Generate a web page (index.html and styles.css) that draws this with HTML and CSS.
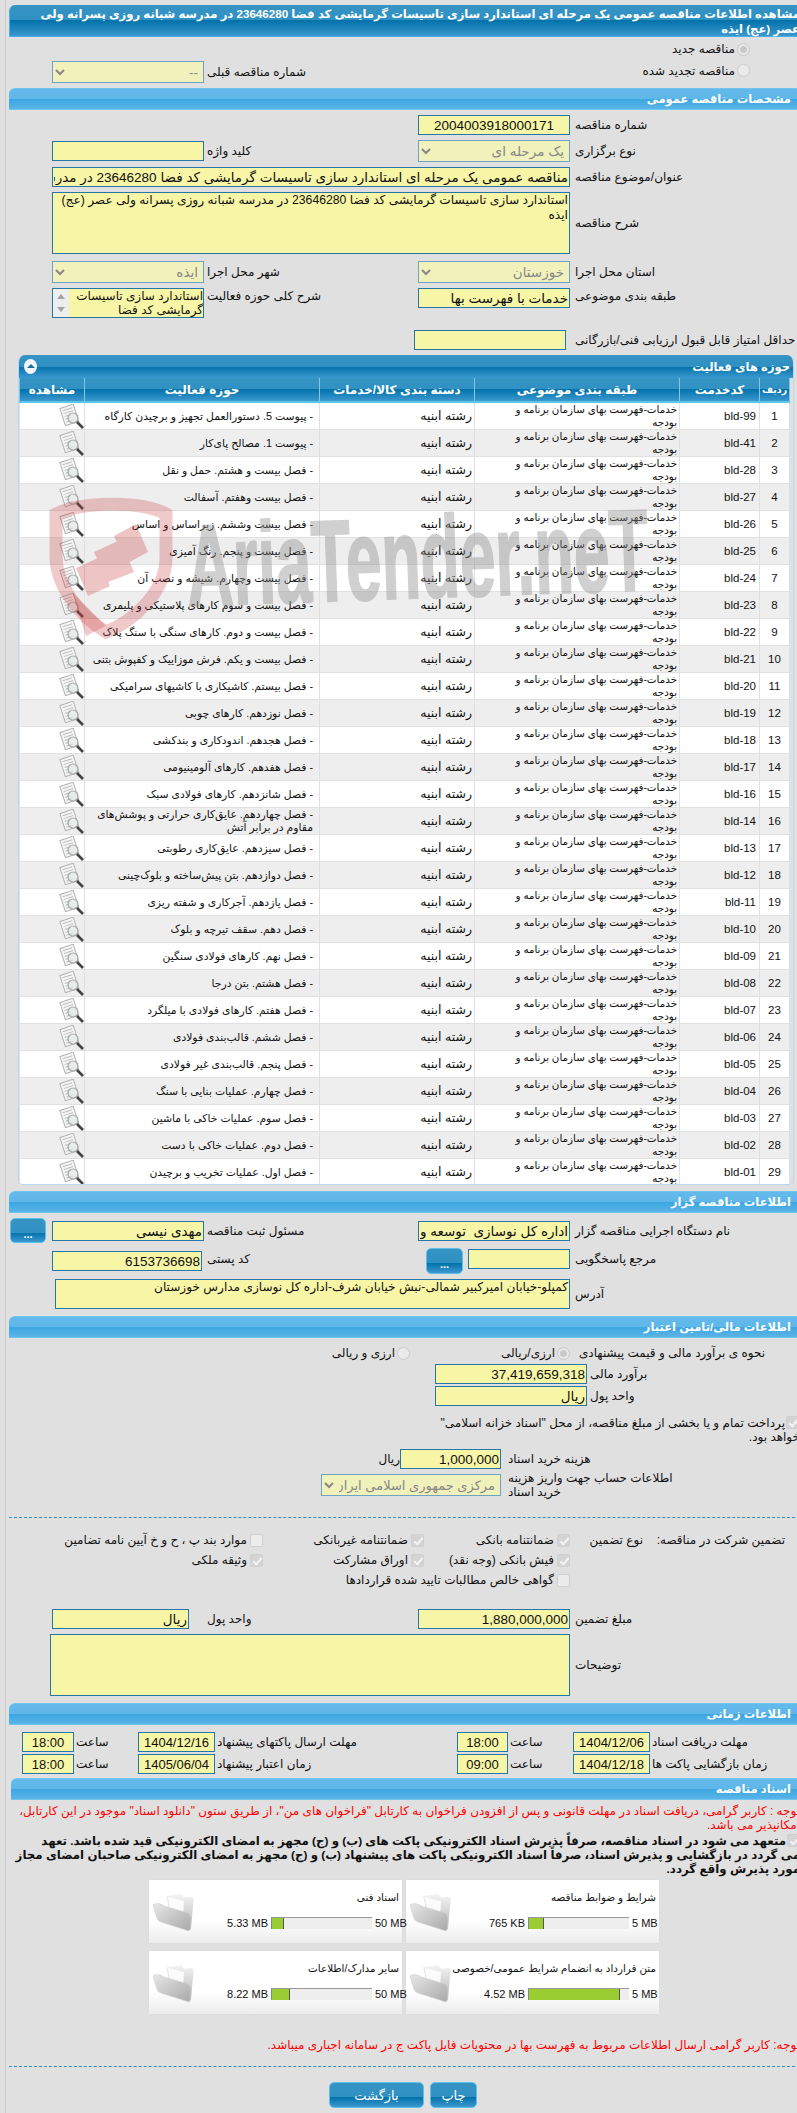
FILE: index.html
```html
<!DOCTYPE html>
<html lang="fa">
<head>
<meta charset="utf-8">
<title>مشاهده اطلاعات مناقصه</title>
<link rel="stylesheet" href="styles.css">
</head>
<body>
<svg class="defs" aria-hidden="true">
  <defs>
    <linearGradient id="fg1" x1="0" y1="0" x2="0" y2="1"><stop offset="0" stop-color="#f4f4f4"/><stop offset="1" stop-color="#b4b4b4"/></linearGradient>
    <linearGradient id="fg2" x1="0" y1="0" x2="1" y2="1"><stop offset="0" stop-color="#e8e8e8"/><stop offset="1" stop-color="#a8a8a8"/></linearGradient>
  </defs>
  <symbol id="mag" viewBox="0 0 25 25">
    <g transform="rotate(-18 10 10)">
      <rect x="3" y="2" width="14" height="18" fill="#f6f6f6" stroke="#b0b0b0" stroke-width="1"/>
      <path d="M5 5h10M5 8h10M5 11h6M5 14h5M5 17h7" stroke="#bdbdbd" stroke-width="1" fill="none"/>
    </g>
    <circle cx="14" cy="14" r="5" fill="#e4e8ea" fill-opacity=".7" stroke="#a8a8a8" stroke-width="1.2"/>
    <path d="M18 18l6 6" stroke="#444" stroke-width="2.6"/>
  </symbol>
  <symbol id="folder" viewBox="0 0 42 38">
    <path d="M14 3 L30 1 C31 5 32 5 38 4 C41 4 42 5 41.5 8 L39 35 C39 37 37 37 36 36 L20 28 Z" fill="url(#fg1)"/>
    <path d="M16 4 L32 8 L31 24 L18 20 Z" fill="#fbfbfb"/>
    <path d="M1 12 C4 10 8 10 12 13 L36 20 C38 21 39 24 39 28 L38 36 C38 38 36 38 34 37 L9 29 C6 28 5 26 4 22 Z" fill="url(#fg2)" stroke="#cfcfcf" stroke-width=".6"/>
  </symbol>
</svg>

<div class="page">
  <h1 class="title">مشاهده اطلاعات مناقصه عمومی یک مرحله ای استاندارد سازی تاسیسات گرمایشی کد فضا 23646280 در مدرسه شبانه روزی پسرانه ولی عصر (عج) ایذه</h1>

  <div class="new-row"><label class="radio-label"><input class="rd" type="radio" checked disabled>مناقصه جدید</label></div>
  <div class="frow prior-row">
    <div class="renew"><label class="radio-label"><input class="rd" type="radio" disabled>مناقصه تجدید شده</label></div>
    <div class="lbl prior-lbl">شماره مناقصه قبلی</div>
    <select class="fld sel" disabled><option>--</option></select>
  </div>

  <h2 class="sec">مشخصات مناقصه عمومی</h2>
  <div class="fgroup first">
    <div class="frow"><div class="lbl">شماره مناقصه</div><input class="fld center" value="2004003918000171" readonly></div>
    <div class="frow g5">
      <div class="lbl">نوع برگزاری</div><select class="fld sel" disabled><option>یک مرحله ای</option></select>
      <div class="lbl">کلید واژه</div><input class="fld" readonly>
    </div>
    <div class="frow g5 tall20">
      <div class="lbl">عنوان/موضوع مناقصه</div>
      <input class="fld span3" value="مناقصه عمومی یک مرحله ای استاندارد سازی تاسیسات گرمایشی کد فضا 23646280 در مدرسه شبانه روزی پسرانه ولی عصر (عج) ایذه" readonly>
    </div>
    <div class="frow g5">
      <div class="lbl">شرح مناقصه</div>
      <textarea class="fld span3 area" readonly>استاندارد سازی تاسیسات گرمایشی کد فضا 23646280 در مدرسه شبانه روزی پسرانه ولی عصر (عج) ایذه</textarea>
    </div>
    <div class="frow g7">
      <div class="lbl">استان محل اجرا</div><select class="fld sel" disabled><option>خوزستان</option></select>
      <div class="lbl">شهر محل اجرا</div><select class="fld sel" disabled><option>ایذه</option></select>
    </div>
    <div class="frow g5 top">
      <div class="lbl">طبقه بندی موضوعی</div><input class="fld" value="خدمات با فهرست بها" readonly>
      <div class="lbl">شرح کلی حوزه فعالیت</div>
      <div class="listbox">
        <div class="listtext">استاندارد سازی تاسیسات گرمایشی کد فضا</div>
        <div class="scroll"><i class="up"></i><i class="down"></i></div>
      </div>
    </div>
    <div class="score-row">
      <div class="lbl score-lbl">حداقل امتیاز قابل قبول ارزیابی فنی/بازرگانی</div>
      <input class="fld score" readonly>
    </div>
  </div>

  <section class="box">
    <div class="box-head"><span>حوزه های فعالیت</span><i class="collapse"></i></div>
    <table class="grid">
      <colgroup><col class="c1"><col class="c2"><col class="c3"><col class="c4"><col class="c5"><col class="c6"></colgroup>
      <thead><tr><th class="th-num">ردیف</th><th>کدخدمت</th><th>طبقه بندی موضوعی</th><th>دسته بندی کالا/خدمات</th><th>حوزه فعالیت</th><th>مشاهده</th></tr></thead>
      <tbody>
        <tr><td>1</td><td class="code">bld-99</td><td class="subj">خدمات-فهرست بهای سازمان برنامه و<br>بودجه</td><td class="cat">رشته ابنیه</td><td class="act">- پیوست 5. دستورالعمل تجهیز و برچیدن کارگاه</td><td class="view"><svg class="mag"><use href="#mag"/></svg></td></tr>
        <tr><td>2</td><td class="code">bld-41</td><td class="subj">خدمات-فهرست بهای سازمان برنامه و<br>بودجه</td><td class="cat">رشته ابنیه</td><td class="act">- پیوست 1. مصالح پای‌کار</td><td class="view"><svg class="mag"><use href="#mag"/></svg></td></tr>
        <tr><td>3</td><td class="code">bld-28</td><td class="subj">خدمات-فهرست بهای سازمان برنامه و<br>بودجه</td><td class="cat">رشته ابنیه</td><td class="act">- فصل بیست و هشتم. حمل و نقل</td><td class="view"><svg class="mag"><use href="#mag"/></svg></td></tr>
        <tr><td>4</td><td class="code">bld-27</td><td class="subj">خدمات-فهرست بهای سازمان برنامه و<br>بودجه</td><td class="cat">رشته ابنیه</td><td class="act">- فصل بیست وهفتم. آسفالت</td><td class="view"><svg class="mag"><use href="#mag"/></svg></td></tr>
        <tr><td>5</td><td class="code">bld-26</td><td class="subj">خدمات-فهرست بهای سازمان برنامه و<br>بودجه</td><td class="cat">رشته ابنیه</td><td class="act">- فصل بیست وششم. زیراساس و اساس</td><td class="view"><svg class="mag"><use href="#mag"/></svg></td></tr>
        <tr><td>6</td><td class="code">bld-25</td><td class="subj">خدمات-فهرست بهای سازمان برنامه و<br>بودجه</td><td class="cat">رشته ابنیه</td><td class="act">- فصل بیست و پنجم. رنگ آمیزی</td><td class="view"><svg class="mag"><use href="#mag"/></svg></td></tr>
        <tr><td>7</td><td class="code">bld-24</td><td class="subj">خدمات-فهرست بهای سازمان برنامه و<br>بودجه</td><td class="cat">رشته ابنیه</td><td class="act">- فصل بیست وچهارم. شیشه و نصب آن</td><td class="view"><svg class="mag"><use href="#mag"/></svg></td></tr>
        <tr><td>8</td><td class="code">bld-23</td><td class="subj">خدمات-فهرست بهای سازمان برنامه و<br>بودجه</td><td class="cat">رشته ابنیه</td><td class="act">- فصل بیست و سوم کارهای پلاستیکی و پلیمری</td><td class="view"><svg class="mag"><use href="#mag"/></svg></td></tr>
        <tr><td>9</td><td class="code">bld-22</td><td class="subj">خدمات-فهرست بهای سازمان برنامه و<br>بودجه</td><td class="cat">رشته ابنیه</td><td class="act">- فصل بیست و دوم. کارهای سنگی با سنگ پلاک</td><td class="view"><svg class="mag"><use href="#mag"/></svg></td></tr>
        <tr><td>10</td><td class="code">bld-21</td><td class="subj">خدمات-فهرست بهای سازمان برنامه و<br>بودجه</td><td class="cat">رشته ابنیه</td><td class="act">- فصل بیست و یکم. فرش موزاییک و کفپوش بتنی</td><td class="view"><svg class="mag"><use href="#mag"/></svg></td></tr>
        <tr><td>11</td><td class="code">bld-20</td><td class="subj">خدمات-فهرست بهای سازمان برنامه و<br>بودجه</td><td class="cat">رشته ابنیه</td><td class="act">- فصل بیستم. کاشیکاری با کاشیهای سرامیکی</td><td class="view"><svg class="mag"><use href="#mag"/></svg></td></tr>
        <tr><td>12</td><td class="code">bld-19</td><td class="subj">خدمات-فهرست بهای سازمان برنامه و<br>بودجه</td><td class="cat">رشته ابنیه</td><td class="act">- فصل نوزدهم. کارهای چوبی</td><td class="view"><svg class="mag"><use href="#mag"/></svg></td></tr>
        <tr><td>13</td><td class="code">bld-18</td><td class="subj">خدمات-فهرست بهای سازمان برنامه و<br>بودجه</td><td class="cat">رشته ابنیه</td><td class="act">- فصل هجدهم. اندودکاری و بندکشی</td><td class="view"><svg class="mag"><use href="#mag"/></svg></td></tr>
        <tr><td>14</td><td class="code">bld-17</td><td class="subj">خدمات-فهرست بهای سازمان برنامه و<br>بودجه</td><td class="cat">رشته ابنیه</td><td class="act">- فصل هفدهم. کارهای آلومینیومی</td><td class="view"><svg class="mag"><use href="#mag"/></svg></td></tr>
        <tr><td>15</td><td class="code">bld-16</td><td class="subj">خدمات-فهرست بهای سازمان برنامه و<br>بودجه</td><td class="cat">رشته ابنیه</td><td class="act">- فصل شانزدهم. کارهای فولادی سبک</td><td class="view"><svg class="mag"><use href="#mag"/></svg></td></tr>
        <tr><td>16</td><td class="code">bld-14</td><td class="subj">خدمات-فهرست بهای سازمان برنامه و<br>بودجه</td><td class="cat">رشته ابنیه</td><td class="act two">- فصل چهاردهم. عایق‌کاری حرارتی و پوشش‌های<br>مقاوم در برابر آتش</td><td class="view"><svg class="mag"><use href="#mag"/></svg></td></tr>
        <tr><td>17</td><td class="code">bld-13</td><td class="subj">خدمات-فهرست بهای سازمان برنامه و<br>بودجه</td><td class="cat">رشته ابنیه</td><td class="act">- فصل سیزدهم. عایق‌کاری رطوبتی</td><td class="view"><svg class="mag"><use href="#mag"/></svg></td></tr>
        <tr><td>18</td><td class="code">bld-12</td><td class="subj">خدمات-فهرست بهای سازمان برنامه و<br>بودجه</td><td class="cat">رشته ابنیه</td><td class="act">- فصل دوازدهم. بتن پیش‌ساخته و بلوک‌چینی</td><td class="view"><svg class="mag"><use href="#mag"/></svg></td></tr>
        <tr><td>19</td><td class="code">bld-11</td><td class="subj">خدمات-فهرست بهای سازمان برنامه و<br>بودجه</td><td class="cat">رشته ابنیه</td><td class="act">- فصل یازدهم. آجرکاری و شفته ریزی</td><td class="view"><svg class="mag"><use href="#mag"/></svg></td></tr>
        <tr><td>20</td><td class="code">bld-10</td><td class="subj">خدمات-فهرست بهای سازمان برنامه و<br>بودجه</td><td class="cat">رشته ابنیه</td><td class="act">- فصل دهم. سقف تیرچه و بلوک</td><td class="view"><svg class="mag"><use href="#mag"/></svg></td></tr>
        <tr><td>21</td><td class="code">bld-09</td><td class="subj">خدمات-فهرست بهای سازمان برنامه و<br>بودجه</td><td class="cat">رشته ابنیه</td><td class="act">- فصل نهم. کارهای فولادی سنگین</td><td class="view"><svg class="mag"><use href="#mag"/></svg></td></tr>
        <tr><td>22</td><td class="code">bld-08</td><td class="subj">خدمات-فهرست بهای سازمان برنامه و<br>بودجه</td><td class="cat">رشته ابنیه</td><td class="act">- فصل هشتم. بتن درجا</td><td class="view"><svg class="mag"><use href="#mag"/></svg></td></tr>
        <tr><td>23</td><td class="code">bld-07</td><td class="subj">خدمات-فهرست بهای سازمان برنامه و<br>بودجه</td><td class="cat">رشته ابنیه</td><td class="act">- فصل هفتم. کارهای فولادی با میلگرد</td><td class="view"><svg class="mag"><use href="#mag"/></svg></td></tr>
        <tr><td>24</td><td class="code">bld-06</td><td class="subj">خدمات-فهرست بهای سازمان برنامه و<br>بودجه</td><td class="cat">رشته ابنیه</td><td class="act">- فصل ششم. قالب‌بندی فولادی</td><td class="view"><svg class="mag"><use href="#mag"/></svg></td></tr>
        <tr><td>25</td><td class="code">bld-05</td><td class="subj">خدمات-فهرست بهای سازمان برنامه و<br>بودجه</td><td class="cat">رشته ابنیه</td><td class="act">- فصل پنجم. قالب‌بندی غیر فولادی</td><td class="view"><svg class="mag"><use href="#mag"/></svg></td></tr>
        <tr><td>26</td><td class="code">bld-04</td><td class="subj">خدمات-فهرست بهای سازمان برنامه و<br>بودجه</td><td class="cat">رشته ابنیه</td><td class="act">- فصل چهارم. عملیات بنایی با سنگ</td><td class="view"><svg class="mag"><use href="#mag"/></svg></td></tr>
        <tr><td>27</td><td class="code">bld-03</td><td class="subj">خدمات-فهرست بهای سازمان برنامه و<br>بودجه</td><td class="cat">رشته ابنیه</td><td class="act">- فصل سوم. عملیات خاکی با ماشین</td><td class="view"><svg class="mag"><use href="#mag"/></svg></td></tr>
        <tr><td>28</td><td class="code">bld-02</td><td class="subj">خدمات-فهرست بهای سازمان برنامه و<br>بودجه</td><td class="cat">رشته ابنیه</td><td class="act">- فصل دوم. عملیات خاکی با دست</td><td class="view"><svg class="mag"><use href="#mag"/></svg></td></tr>
        <tr><td>29</td><td class="code">bld-01</td><td class="subj">خدمات-فهرست بهای سازمان برنامه و<br>بودجه</td><td class="cat">رشته ابنیه</td><td class="act">- فصل اول. عملیات تخریب و برچیدن</td><td class="view"><svg class="mag"><use href="#mag"/></svg></td></tr>
      </tbody>
    </table>
  </section>

  <h2 class="sec after-box">اطلاعات مناقصه گزار</h2>
  <div class="frow org-a">
    <div class="lbl">نام دستگاه اجرایی مناقصه گزار</div><input class="fld" value="اداره کل نوسازی  توسعه و تجهیز مدارس" readonly>
    <div class="lbl">مسئول ثبت مناقصه</div><input class="fld" value="مهدی نیسی" readonly>
    <button class="btn dots" type="button">...</button>
  </div>
  <div class="frow org-b">
    <div class="lbl">مرجع پاسخگویی</div>
    <div class="ref-cell"><input class="fld ref" readonly><button class="btn dots small" type="button">...</button></div>
    <div class="lbl">کد پستی</div><input class="fld postal" value="6153736698" readonly>
  </div>
  <div class="frow g5">
    <div class="lbl">آدرس</div>
    <textarea class="fld span3 addr" readonly>کمپلو-خیابان امیرکبیر شمالی-نبش خیابان شرف-اداره کل نوسازی مدارس خوزستان</textarea>
  </div>

  <h2 class="sec g7">اطلاعات مالی/تامین اعتبار</h2>
  <div class="est-row">
    <div class="est-lbl">نحوه ی برآورد مالی و قیمت پیشنهادی</div>
    <label class="radio-label est-a"><input class="rd" type="radio" checked disabled>ارزی/ریالی</label>
    <label class="radio-label est-b"><input class="rd" type="radio" disabled>ارزی و ریالی</label>
  </div>
  <div class="fin-row"><div class="lbl">برآورد مالی</div><input class="fld" value="37,419,659,318" readonly></div>
  <div class="fin-row g2"><div class="lbl">واحد پول</div><input class="fld" value="ریال" readonly></div>
  <p class="treasury"><input class="cb" type="checkbox" checked disabled>پرداخت تمام و یا بخشی از مبلغ مناقصه، از محل "اسناد خزانه اسلامی" خواهد بود.</p>
  <div class="cost-row"><div class="lbl">هزینه خرید اسناد</div><input class="fld cost" value="1,000,000" readonly><span class="unit">ریال</span></div>
  <div class="cost-row acct"><div class="lbl acct-lbl">اطلاعات حساب جهت واریز هزینه خرید اسناد</div><select class="fld sel acct-sel" disabled><option>مرکزی جمهوری اسلامی ایران</option></select></div>

  <hr class="dash">

  <div class="guarantee">
    <div class="g-a">تضمین شرکت در مناقصه:</div>
    <div class="g-b">نوع تضمین</div>
    <label class="chk"><input class="cb" type="checkbox" checked disabled>ضمانتنامه بانکی</label>
    <label class="chk"><input class="cb" type="checkbox" checked disabled>ضمانتنامه غیربانکی</label>
    <label class="chk"><input class="cb" type="checkbox" disabled>موارد بند پ ، ح و خ آیین نامه تضامین</label>
    <label class="chk c1s"><input class="cb" type="checkbox" checked disabled>فیش بانکی (وجه نقد)</label>
    <label class="chk"><input class="cb" type="checkbox" checked disabled>اوراق مشارکت</label>
    <label class="chk"><input class="cb" type="checkbox" checked disabled>وثیقه ملکی</label>
    <label class="chk c1s wide"><input class="cb" type="checkbox" disabled>گواهی خالص مطالبات تایید شده قراردادها</label>
  </div>

  <div class="frow amount">
    <div class="lbl">مبلغ تضمین</div><input class="fld" value="1,880,000,000" readonly>
    <div class="lbl">واحد پول</div><input class="fld unit-fld" value="ریال" readonly>
  </div>
  <div class="frow g5">
    <div class="lbl">توضیحات</div>
    <textarea class="fld span3 area notes" readonly></textarea>
  </div>

  <h2 class="sec g7">اطلاعات زمانی</h2>
  <div class="trow t1">
    <div class="lbl">مهلت دریافت اسناد</div><input class="fld" value="1404/12/06" readonly>
    <div class="lbl">ساعت</div><input class="fld" value="18:00" readonly>
    <div class="lbl">مهلت ارسال پاکتهای پیشنهاد</div><input class="fld" value="1404/12/16" readonly>
    <div class="lbl">ساعت</div><input class="fld" value="18:00" readonly>
  </div>
  <div class="trow t2">
    <div class="lbl">زمان بازگشایی پاکت ها</div><input class="fld" value="1404/12/18" readonly>
    <div class="lbl">ساعت</div><input class="fld" value="09:00" readonly>
    <div class="lbl">زمان اعتبار پیشنهاد</div><input class="fld" value="1405/06/04" readonly>
    <div class="lbl">ساعت</div><input class="fld" value="18:00" readonly>
  </div>

  <h2 class="sec docs">اسناد مناقصه</h2>
  <p class="notice">توجه : کاربر گرامی، دریافت اسناد در مهلت قانونی و پس از افزودن فراخوان به کارتابل "فراخوان های من"، از طریق ستون "دانلود اسناد" موجود در این کارتابل، امکانپذیر می باشد.</p>
  <p class="pledge"><input class="cb" type="checkbox" checked disabled>متعهد می شود در اسناد مناقصه، صرفاً پذیرش اسناد الکترونیکی پاکت های (ب) و (ج) مجهز به امضای الکترونیکی قید شده باشد. تعهد<br>می گردد در بازگشایی و پذیرش اسناد، صرفاً اسناد الکترونیکی پاکت های پیشنهاد (ب) و (ج) مجهز به امضای الکترونیکی صاحبان امضای مجاز<br>مورد پذیرش واقع گردد.</p>

  <div class="cards">
    <article class="card">
      <div class="card-body"><div class="card-title">شرایط و ضوابط مناقصه</div>
        <div class="quota"><span class="q-max">5 MB</span><span class="bar"><i class="fill f1"></i></span><span class="q-used">765 KB</span></div></div>
      <svg class="folder"><use href="#folder"/></svg>
    </article>
    <article class="card">
      <div class="card-body"><div class="card-title">اسناد فنی</div>
        <div class="quota"><span class="q-max">50 MB</span><span class="bar"><i class="fill f2"></i></span><span class="q-used">5.33 MB</span></div></div>
      <svg class="folder"><use href="#folder"/></svg>
    </article>
    <article class="card">
      <div class="card-body"><div class="card-title">متن قرارداد به انضمام شرایط عمومی/خصوصی</div>
        <div class="quota"><span class="q-max">5 MB</span><span class="bar"><i class="fill f3"></i></span><span class="q-used">4.52 MB</span></div></div>
      <svg class="folder"><use href="#folder"/></svg>
    </article>
    <article class="card">
      <div class="card-body"><div class="card-title">سایر مدارک/اطلاعات</div>
        <div class="quota"><span class="q-max">50 MB</span><span class="bar"><i class="fill f4"></i></span><span class="q-used">8.22 MB</span></div></div>
      <svg class="folder"><use href="#folder"/></svg>
    </article>
  </div>

  <p class="notice second">توجه: کاربر گرامی ارسال اطلاعات مربوط به فهرست بها در محتویات فایل پاکت ج در سامانه اجباری میباشد.</p>
  <hr class="dash end">
  <div class="actions">
    <button class="btn act-print" type="button">چاپ</button>
    <button class="btn act-back" type="button">بازگشت</button>
  </div>
</div>

<svg class="watermark" viewBox="0 0 610 150" aria-hidden="true">
  <path d="M10 18 C34 6 95 4 120 18 L120 62 C120 95 88 125 60 136 C34 120 10 90 10 60 Z" fill="none" stroke="#c83c3c" stroke-opacity=".27" stroke-width="13"/>
  <path d="M30 72 L52 62 L64 90 L42 100 Z M48 56 L74 44 L88 76 L62 86 Z M68 40 L90 28 L102 56 L80 68 Z" fill="#c83c3c" fill-opacity=".3"/>
  <path d="M26 96 L40 140 L60 130 Z" fill="#c83c3c" fill-opacity=".27"/>
  <text class="wm-text" x="142" y="110" textLength="462" lengthAdjust="spacingAndGlyphs" transform="rotate(-2 142 110)">AriaTender.neT</text>
</svg>
</body>
</html>
```
FILE: styles.css
```css
* { box-sizing: border-box; }
html, body { margin: 0; padding: 0; }
body {
  width: 797px;
  height: 2113px;
  overflow: hidden;
  position: relative;
  background: #e0e0e0;
  font-family: "Liberation Sans", "DejaVu Sans", sans-serif;
  font-size: 12px;
  line-height: 14px;
  color: #111;
}
.defs { position: absolute; width: 0; height: 0; }
.page {
  direction: rtl;
  width: 795px;
  height: 2113px;
  margin-left: 5px;
  padding: 5px 0 0 3px;
  border-left: 1px solid #cbcbcb;
}
.title {
  margin: 0;
  height: 32px;
  padding: 2px 0 0 4px;
  font-size: 11.6px;
  line-height: 14.5px;
  font-weight: bold;
  color: #fff;
  border-radius: 6px 0 0 0;
  border: 1px solid #48aee6;
  border-width: 0 0 1px 1px;
  background: linear-gradient(#3694c4 0, #2f90c2 50%, #0472aa 50%, #3a98cf 100%);
}
.new-row { height: 24px; padding: 5px 50px 0 0; }
.radio-label { display: inline-flex; align-items: center; gap: 2px; height: 14px; white-space: nowrap; }
.rd {
  appearance: none;
  width: 13px; height: 13px;
  margin: 0;
  border-radius: 50%;
  border: 1px solid #cdcdcd;
  background: #eaeaea;
  flex: none;
  position: relative;
}
.rd:checked { background: #c9c9c9; box-shadow: inset 0 0 0 2px #eaeaea; }
.cb {
  appearance: none;
  width: 13px; height: 13px;
  margin: 0 0 0 3px;
  border: 1px solid #d0d0d0;
  border-radius: 2px;
  background: #ececec;
  flex: none;
  position: relative;
}
.cb:checked { background: #d4d4d4; }
.cb:checked::after {
  content: "";
  position: absolute;
  left: 4px; top: 1px;
  width: 3px; height: 7px;
  border: solid #f4f4f4;
  border-width: 0 2px 2px 0;
  transform: rotate(40deg);
}

/* Forms */
.frow {
  display: grid;
  grid-template-columns: 230px 152px 214px 152px;
  align-items: center;
}
.lbl { text-align: left; padding-left: 5px; white-space: nowrap; }
.frow > .lbl:nth-of-type(n+2) { padding-left: 3px; }
.fld {
  width: 152px;
  height: 20px;
  margin: 0;
  padding: 0 1px;
  border: 1px solid #2776a8;
  border-radius: 0;
  background: #f7f5a6;
  font-family: "Liberation Sans", "DejaVu Sans", sans-serif;
  font-size: 13.5px;
  color: #111;
  outline: none;
  direction: rtl;
}
.center { text-align: center; }
.sel {
  height: 22px;
  border-color: #6fa3c4;
  background-color: #f1f1bb;
  color: #888;
  opacity: 1;
}
.span3 { grid-column: span 3; width: 518px; }
.area { height: 62px; resize: none; font-size: 12.2px; line-height: 15px; display: block; overflow: hidden; }
.prior-row { height: 22px; }
.renew { grid-column: 1 / span 2; padding-right: 50px; }
.prior-lbl { grid-column: 3; padding-left: 3px; }
.prior-row .sel { grid-column: 4; }
.sec {
  margin: 5px 0 0;
  height: 22px;
  padding: 1px 9px 0 0;
  font-size: 11.5px;
  line-height: 19px;
  font-weight: bold;
  color: #fff;
  border-radius: 6px 0 0 0;
  border-top: 1px solid #70c6ee;
  border-bottom: 1px solid #70c6ee;
  background: linear-gradient(#63b9ea 0, #5fb7e9 50%, #3ca6e1 50%, #5ab4e7 100%);
}
.sec.g7 { margin-top: 7px; }
.first { padding-top: 5px; }
.g5 { margin-top: 5px; }
.g7 { margin-top: 7px; }
.top { align-items: start; }
.top > .lbl { padding-top: 1px; }
.listbox {
  display: flex;
  width: 152px;
  height: 30px;
  border: 1px solid #2776a8;
  background: #f7f5a6;
  overflow: hidden;
}
.listtext { flex: 1; font-size: 12px; line-height: 14px; }
.scroll {
  width: 16px;
  background: #eeeeee;
  display: flex;
  flex-direction: column;
  justify-content: space-between;
  align-items: center;
  padding: 5px 0;
}
.scroll i { width: 0; height: 0; border: 4px solid transparent; }
.scroll .up { border-bottom: 5px solid #a3a3a3; border-top: 0; }
.scroll .down { border-top: 5px solid #a3a3a3; border-bottom: 0; }
.score-row { display: flex; margin-top: 12px; align-items: center; }
.score-lbl { width: 225px; padding-left: 0; padding-right: 4px; text-align: left; margin-left: 9px; }
.score-row .score { width: 152px; }

/* Activity table */
.box {
  margin: 5px 6px 0 0;
  width: 776px;
  height: 830px;
  border: 1px solid #b6d9ec;
  border-top: 0;
  border-radius: 7px 7px 5px 5px;
  padding: 0 3px;
  overflow: hidden;
  position: relative;
}
.box-head {
  margin: 0 -3px;
  height: 23px;
  display: flex;
  justify-content: space-between;
  align-items: center;
  padding: 0 3px 0 5px;
  font-weight: bold;
  font-size: 11.5px;
  color: #fff;
  background: linear-gradient(#3694c4 0, #2f90c2 50%, #0472aa 50%, #3a98cf 100%);
}
.collapse {
  position: relative;
  width: 13px; height: 15px;
  border-radius: 50%;
  background: #f2f6f8;
}
.collapse::after {
  content: "";
  position: absolute;
  left: 3px; top: 5px;
  border: 4px solid transparent;
  border-top: 0;
  border-bottom: 4px solid #1b6e9c;
}
.grid { table-layout: fixed; border-collapse: collapse; width: 770px; direction: rtl; font-size: 10.8px; }
.c1 { width: 30px; } .c2 { width: 80px; } .c3 { width: 205px; } .c4 { width: 155px; } .c5 { width: 235px; } .c6 { width: 65px; }
.grid th {
  height: 24px;
  padding: 0;
  font-size: 12px;
  font-weight: bold;
  color: #fff;
  white-space: nowrap;
  border: 1px solid #7cc7ea;
  border-width: 0 1px;
  border-bottom: 2px solid #5cc5ee;
  background: linear-gradient(#3694c4 0, #2f90c2 50%, #0472aa 50%, #3a98cf 100%);
}
.grid .th-num { font-size: 9.5px; }
.grid td {
  height: 27px;
  padding: 0 2px;
  line-height: 13px;
  white-space: nowrap;
  text-align: right;
  border: 1px solid #e0e0e0;
  background: #fff;
}
.grid tr:nth-child(even) td { background: #eee; }
.grid td:first-child { text-align: center; font-size: 11.5px; }
.grid .code { padding-right: 3px; font-size: 11.5px; }
.grid .subj { font-size: 10.3px; }
.grid .cat { font-size: 12.5px; }
.grid .act { padding-right: 6px; }
.grid .view { padding: 0; text-align: right; vertical-align: middle; }
.mag { width: 25px; height: 25px; display: block; }

.after-box { margin-top: 6px; }
.org-a { grid-template-columns: 230px 152px 214px 152px 42px; margin-top: 5px; height: 25px; }
.btn {
  height: 25px;
  padding: 0;
  border: 1px solid #5cc0ea;
  border-radius: 5px;
  color: #fff;
  font-family: "Liberation Sans", "DejaVu Sans", sans-serif;
  font-size: 13px;
  background: linear-gradient(#3694c4 0, #2f90c2 60%, #0472aa 60%, #3a98cf 100%);
}
.dots { width: 36px; justify-self: end; font-weight: bold; line-height: 30px; font-size: 11px; }
.org-b { margin-top: 5px; height: 26px; align-items: start; }
.org-b > .lbl { padding-top: 4px; }
.ref-cell { display: flex; gap: 5px; align-items: flex-start; margin-top: 1px; }
.ref { width: 102px; }
.small { height: 26px; width: 37px; margin-top: -1px; }
.postal { width: 150px; justify-self: end; margin-top: 3px; }
.addr { height: 30px; width: 515px; justify-self: start; resize: none; font-size: 12.1px; line-height: 14px; display: block; overflow: hidden; }

.est-row { height: 26px; padding-top: 4px; display: flex; align-items: center; }
.est-lbl { width: 230px; padding-right: 35px; white-space: nowrap; }
.est-a { width: 160px; }
.fin-row { display: grid; grid-template-columns: 213px 152px; align-items: center; }
.fin-row .lbl { padding-left: 3px; }
.g2 { margin-top: 2px; }
.treasury { margin: 10px 0 0; width: 370px; line-height: 14px; height: 28px; }
.treasury .cb { margin: 0 1px 0 1px; vertical-align: -2px; }
.cost-row { display: grid; grid-template-columns: 299px auto auto; justify-content: start; align-items: center; margin-top: 5px; }
.cost-row .lbl { padding-left: 7px; }
.cost { width: 101px; }
.acct { margin-top: 5px; grid-template-rows: 22px; }
.acct-lbl { white-space: normal; padding-right: 125px; }
.acct-sel { width: 180px; font-size: 13px; }

.dash { margin: 21px 0 0; border: 0; border-top: 1px dashed #2f8dbd; height: 0; }
.guarantee {
  display: grid;
  grid-template-columns: 142px 73px 146px 161px 1fr;
  grid-auto-rows: 20px;
  padding: 12px 15px 0 0;
  align-items: center;
}
.g-a, .g-b { white-space: nowrap; }
.chk { display: inline-flex; align-items: center; white-space: nowrap; }
.c1s { grid-column: 3; }
.wide { grid-column: 3 / span 3; }
.amount { margin-top: 19px; }
.unit-fld { width: 137px; justify-self: end; }
.notes { width: 520px; justify-self: start; }

.trow {
  display: grid;
  grid-template-columns: 150px 77px 65px 51px 242px 77px 64px 52px;
  align-items: center;
}
.trow .fld { width: 100%; text-align: center; font-size: 13px; padding: 0; }
.trow .lbl { padding-left: 2px; }
.t1 { margin-top: 7px; }
.t2 { margin-top: 2px; }
.docs { margin: 4px 0 0 2px; }

.notice { margin: 4px 0 0; color: #f00; line-height: 14px; font-size: 12px; }
.pledge { margin: 2px 0 0; font-weight: bold; line-height: 14px; font-size: 11.8px; height: 42px; white-space: nowrap; }
.pledge .cb { margin: 0 0 0 1px; vertical-align: -2px; }
.cards {
  display: grid;
  grid-template-columns: 253px 253px;
  grid-auto-rows: 63px;
  column-gap: 4px;
  row-gap: 8px;
  margin: 4px 141px 0 0;
  justify-content: start;
}
.card {
  display: flex;
  padding: 0 3px;
  background: linear-gradient(#fff 0, #fff 65%, #ececec 100%);
  box-shadow: 0 0 1px #cfcfcf;
}
.card-body { flex: 1; min-width: 0; padding-top: 11px; }
.card-title { height: 14px; line-height: 14px; font-size: 10.4px; white-space: nowrap; }
.quota { display: flex; align-items: center; height: 12px; margin-top: 12px; gap: 3px; padding-right: 1px; font-size: 11px; }
.q-max, .q-used { white-space: nowrap; }
.q-max { width: 23px; text-align: right; direction: ltr; flex: none; }
.q-used { direction: ltr; }
.bar {
  position: relative;
  width: 101px; height: 12px;
  background: #eee;
  border-top: 1px solid #999;
  flex: none;
  display: block;
}
.bar .fill {
  position: absolute;
  left: 0; top: 0; bottom: 0;
  background: #9acd32;
  border-left: 1px solid #888;
  border-right: 1px solid #555;
}
.f1 { width: 16px; } .f2 { width: 13px; } .f3 { width: 92px; } .f4 { width: 19px; }
.folder { width: 42px; height: 38px; margin-top: 13px; flex: none; }
.second { margin-top: 24px; }
.end { margin-top: 14px; }
.actions { display: flex; gap: 6px; margin: 15px 323px 0 0; }
.act-print { width: 47px; height: 26px; }
.act-back { width: 95px; height: 26px; }

.watermark {
  position: absolute;
  left: 46px;
  top: 496px;
  width: 610px;
  height: 150px;
  pointer-events: none;
}
.wm-text {
  font-family: "Liberation Sans", sans-serif;
  font-weight: bold;
  font-size: 116px;
  fill: #8c8c8c;
  stroke: #8c8c8c;
  stroke-width: 2px;
  opacity: .4;
}
```
